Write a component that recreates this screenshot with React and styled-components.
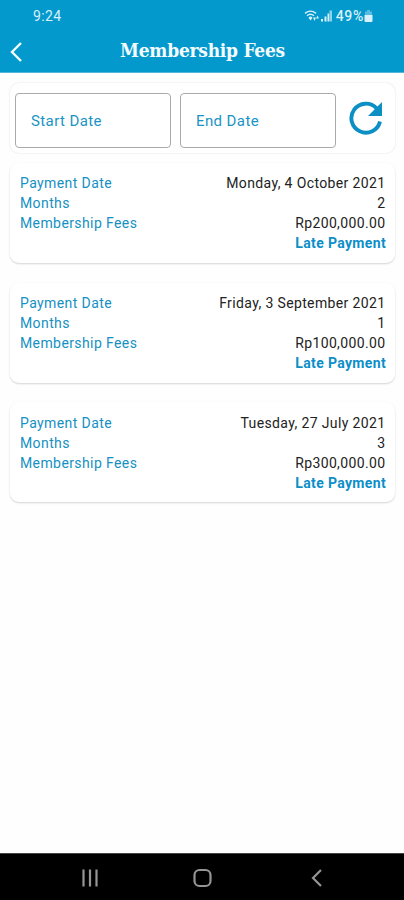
import React, { useState } from 'react';
import styled, { createGlobalStyle } from 'styled-components';

const GlobalStyle = createGlobalStyle`
    * {
        box-sizing: border-box;
    }
    body {
        margin: 0;
        background-color: #fefefe;
        font-family: Roboto, "Liberation Sans", sans-serif;
    }
`;

const Container = styled.div`
    display: flex;
    flex-direction: column;
    height: 900px;
    overflow: hidden;
`;

const Header = styled.header`
    height: 73px;
    flex-shrink: 0;
    background-color: #0399cd;
    border-bottom: 1px solid #52b5d9;
    color: #f4fbfe;
`;

const StatusBar = styled.div`
    display: flex;
    align-items: center;
    justify-content: space-between;
    height: 31px;
    padding: 0 31px 0 33px;
    color: #d8f0f9;
    font-size: 14px;
`;

const Clock = styled.span`
    letter-spacing: 0.4px;
`;

const StatusIcons = styled.div`
    display: flex;
    align-items: center;
`;

const Battery = styled.span`
    margin: 0 0 0 3px;
    font-size: 14px;
    font-weight: 500;
    letter-spacing: 0.7px;
`;

const TitleBar = styled.div`
    display: grid;
    grid-template-columns: 32px 1fr 31px;
    align-items: center;
    height: 38px;
`;

const BackButton = styled.button`
    display: flex;
    border: none;
    padding: 3px 0 0 9px;
    background: none;
    color: inherit;
    cursor: pointer;
`;

const Title = styled.h1`
    margin: 0;
    font-family: "DejaVu Serif Condensed", "DejaVu Serif", serif;
    font-stretch: condensed;
    font-size: 19px;
    font-weight: 700;
    letter-spacing: -0.25px;
    line-height: 24px;
    text-align: center;
    white-space: nowrap;
`;

const Content = styled.main`
    flex: 1;
    padding: 10px 9px 0 10px;
`;

const Card = styled.section`
    border-radius: 9px;
    background-color: #fff;
    box-shadow: 0 1px 2px rgba(0, 0, 0, 0.17);
`;

const FilterCard = styled(Card)`
    display: flex;
    align-items: center;
    gap: 9px;
    height: 70px;
    padding: 5px 5px 0;
    margin-bottom: 10px;
    box-shadow: 0 0 2px rgba(0, 0, 0, 0.14);
`;

const DateInput = styled.input`
    width: 156px;
    height: 55px;
    border: 1px solid #aaa;
    border-radius: 4px;
    padding: 1px 15px 0;
    outline: none;
    background-color: transparent;
    color: #1a94c4;
    font-family: inherit;
    font-size: 15px;
    letter-spacing: 0.4px;

    &::placeholder {
        color: #1a94c4;
        opacity: 1;
    }
`;

const RefreshButton = styled.button`
    display: flex;
    border: none;
    padding: 0 0 6px 3px;
    background: none;
    color: #0c8fc5;
    cursor: pointer;
`;

const PaymentList = styled.div`
    display: flex;
    flex-direction: column;
    gap: 19.6px;
`;

const PaymentCard = styled(Card)`
    height: 100px;
    padding: 10.4px 9px 0 10px;
`;

const Row = styled.div`
    display: flex;
    justify-content: space-between;
    height: 20px;
    font-size: 14px;
    line-height: 20px;
    letter-spacing: 0.4px;
`;

const Label = styled.span`
    color: #1590c2;
`;

const Value = styled.span`
    margin-right: 0.5px;
    color: #222;
    letter-spacing: 0.37px;
`;

const Status = styled.strong`
    margin-left: auto;
    color: #0c8fc9;
    font-weight: 700;
    letter-spacing: 0.35px;
`;

const NavBar = styled.nav`
    display: flex;
    align-items: center;
    justify-content: space-between;
    height: 47px;
    flex-shrink: 0;
    padding: 2px 78px 0 80px;
    border-top: 1px solid #444;
    background-color: #000;
    color: #959595;
`;

const payments = [
    { date: 'Monday, 4 October 2021', months: 2, fees: 'Rp200,000.00' },
    { date: 'Friday, 3 September 2021', months: 1, fees: 'Rp100,000.00' },
    { date: 'Tuesday, 27 July 2021', months: 3, fees: 'Rp300,000.00' },
];

const WifiIcon = () => (
    <svg width="16" height="14" viewBox="0 0 16 14" fill="none" stroke="currentColor" strokeWidth="1.4">
        <path d="M1 4.4Q6.5-.1 12 4.4M3 6.7Q6.5 3.8 10 6.7M5 9Q6.5 7.6 8 9" />
        <path d="M6.5 11.4 4.6 9h3.8z" fill="currentColor" stroke="none" />
        <path d="M9 8.5h3L10.5 12zM12 9.5h3L13.5 6.5z" fill="currentColor" stroke="none" />
    </svg>
);

const SignalIcon = () => (
    <svg width="13" height="14" viewBox="0 0 13 14" fill="currentColor">
        <path d="M1 10h2v2.5H1zM4.5 7.5h2v5h-2zM7.5 4.5h1.7v8H7.5z" />
        <path d="M9.5 1.5H12v11H9.5z" opacity=".65" />
    </svg>
);

const BatteryIcon = () => (
    <svg width="9" height="14" viewBox="0 0 9 14" fill="currentColor">
        <path d="M3 1h3v1.5h2V7H1V2.5h2z" opacity=".4" />
        <path d="M.5 6h8v6q0 1-1 1h-6q-1 0-1-1z" />
    </svg>
);

const App = () => {
    const [startDate, setStartDate] = useState("");
    const [endDate, setEndDate] = useState("");

    const handleReset = () => {
        setStartDate("");
        setEndDate("");
    };

    return (
        <Container>
            <GlobalStyle />
            <Header>
                <StatusBar>
                    <Clock>9:24</Clock>
                    <StatusIcons>
                        <WifiIcon />
                        <SignalIcon />
                        <Battery>49%</Battery>
                        <BatteryIcon />
                    </StatusIcons>
                </StatusBar>
                <TitleBar>
                    <BackButton aria-label="Back">
                        <svg width="14" height="20" viewBox="0 0 14 20" fill="none" stroke="currentColor" strokeWidth="2.4">
                            <path d="M12 1 3 10l9 9" />
                        </svg>
                    </BackButton>
                    <Title>Membership Fees</Title>
                </TitleBar>
            </Header>

            <Content>
                <FilterCard>
                    <DateInput placeholder="Start Date" onChange={e => setStartDate(e.target.value)} value={startDate} />
                    <DateInput placeholder="End Date" onChange={e => setEndDate(e.target.value)} value={endDate} />
                    <RefreshButton aria-label="Refresh" onClick={handleReset}>
                        <svg width="36" height="36" viewBox="0 0 36 36">
                            <path d="M32 21.5A14.5 14.5 0 1 1 28.6 8.4" fill="none" stroke="currentColor" strokeWidth="3.9" />
                            <path d="M34 2v14H20z" fill="currentColor" />
                        </svg>
                    </RefreshButton>
                </FilterCard>

                <PaymentList>
                    {payments.map((payment) => (
                        <PaymentCard key={payment.date}>
                            <Row>
                                <Label>Payment Date</Label>
                                <Value>{payment.date}</Value>
                            </Row>
                            <Row>
                                <Label>Months</Label>
                                <Value>{payment.months}</Value>
                            </Row>
                            <Row>
                                <Label>Membership Fees</Label>
                                <Value>{payment.fees}</Value>
                            </Row>
                            <Row>
                                <Status>Late Payment</Status>
                            </Row>
                        </PaymentCard>
                    ))}
                </PaymentList>
            </Content>

            <NavBar>
                <svg width="20" height="20" viewBox="0 0 20 20" stroke="currentColor" strokeWidth="2.2">
                    <path d="M3.5 1.5v17M10 1.5v17M16.5 1.5v17" />
                </svg>
                <svg width="20" height="20" viewBox="0 0 20 20" fill="none" stroke="currentColor" strokeWidth="2.2">
                    <rect x="1.5" y="2" width="16" height="16" rx="5" />
                </svg>
                <svg width="20" height="20" viewBox="0 0 20 20" fill="none" stroke="currentColor" strokeWidth="2.2">
                    <path d="M15 2 7 10l8 8" />
                </svg>
            </NavBar>
        </Container>
    );
};

export default App;
